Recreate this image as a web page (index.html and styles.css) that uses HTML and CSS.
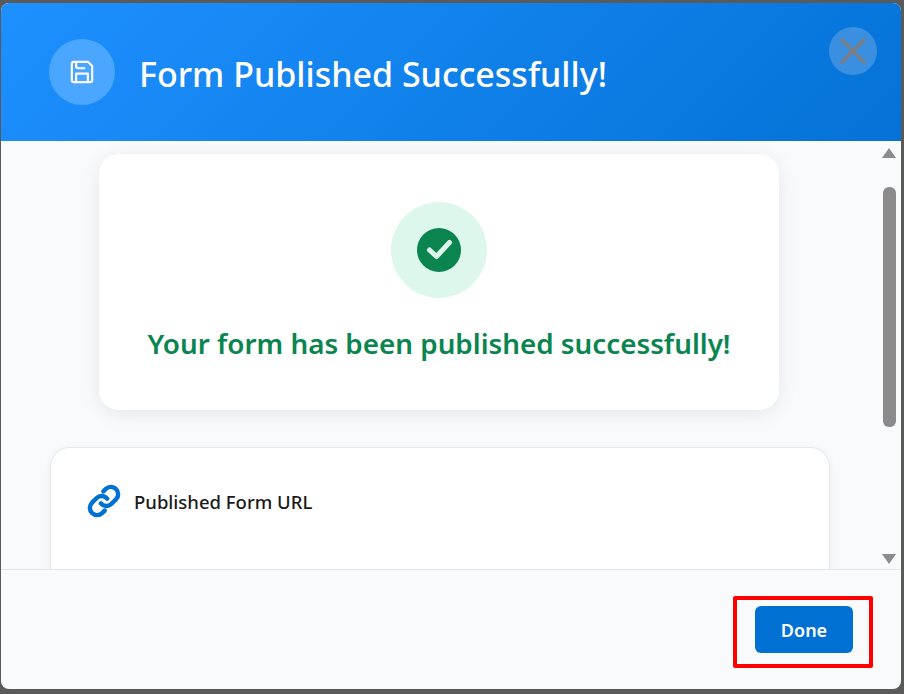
FILE: index.html
```html
<!DOCTYPE html>
<html lang="en">
	<head>
		<title>Form Published</title>
		<meta charset="utf-8">
		<link rel="stylesheet" href="styles.css">
	</head>

	<body>
		<div class="dialog">
			<div class="dialog-header">
				<div class="header-icon">
					<svg width="30" height="30" viewBox="0 0 28 28" fill="none" stroke="#fff" stroke-width="2" stroke-linejoin="round">
						<path d="M4.5 6.5a2 2 0 0 1 2-2h13l4 4v13a2 2 0 0 1-2 2h-15a2 2 0 0 1-2-2z"/>
						<path d="M8.5 23.5v-8h11v8"/>
						<path d="M8.5 4.5v4a2 2 0 0 0 2 2h6.500"/>
					</svg>
				</div>
				<h1 class="dialog-title">Form Published Successfully!</h1>
				<button class="close-btn">
					<svg width="26" height="26" viewBox="0 0 26 26" stroke="#7b7f85" stroke-width="3.600">
						<path d="M1 1l24 24M25 1L1 25"/>
					</svg>
				</button>
			</div>

			<div class="dialog-body">
				<div class="scroll-area">
					<div class="success-card">
						<div class="success-ring">
							<svg width="44" height="44" viewBox="0 0 44 44">
								<circle cx="22" cy="22" r="22" fill="#0a8550"/>
								<path d="M12.500 22l7 6.500 13-14" fill="none" stroke="#def7ec" stroke-width="5" stroke-linecap="round" stroke-linejoin="round"/>
							</svg>
						</div>
						<div class="success-text">Your form has been published successfully!</div>
					</div>

					<div class="url-card">
						<div class="url-label">
							<svg width="38" height="38" viewBox="0 0 24 24" fill="none" stroke="#0070d2" stroke-width="2.800" stroke-linecap="round">
								<path d="M10 13.500a4.500 4.500 0 0 0 6.600.4l3.100-3.100a4.600 4.600 0 0 0-6.500-6.500l-1.600 1.600"/>
								<path d="M14 10.500a4.500 4.500 0 0 0-6.600-.4l-3.100 3.100a4.600 4.600 0 0 0 6.500 6.500l1.600-1.600"/>
							</svg>
							<span>Published Form URL</span>
						</div>
					</div>
				</div>

				<div class="scrollbar">
					<div class="arrow-up"></div>
					<div class="thumb"></div>
					<div class="arrow-down"></div>
				</div>
			</div>

			<div class="dialog-footer">
				<button class="done-btn">Done</button>
				<div class="highlight"></div>
			</div>
		</div>
	</body>
</html>
```

FILE: styles.css
```css
html, body {
	height: 100%;
}

body {
	margin: 0;
	padding: 3px 3px 5px 1px;
	box-sizing: border-box;
	background: #5a5a5a;
	font-family: "Noto Sans", "Open Sans", sans-serif;
}

.dialog {
	height: 100%;
	display: flex;
	flex-direction: column;
	background: #f9fafc;
	border-radius: 8px;
	overflow: hidden;
}

.dialog-header {
	position: relative;
	flex: 0 0 138px;
	box-sizing: border-box;
	display: flex;
	align-items: center;
	padding: 0 48px;
	gap: 24px;
	background: linear-gradient(135deg, #1e90ff, #0472d6);
	color: #fff;
}

.header-icon {
	width: 66px;
	height: 66px;
	border-radius: 50%;
	background: #4ba6ff;
	display: flex;
	align-items: center;
	justify-content: center;
}

.dialog-title {
	margin: 0;
	padding-top: 4px;
	font-size: 34px;
	font-weight: 500;
	white-space: nowrap;
}

.close-btn {
	position: absolute;
	top: 24px;
	right: 24px;
	width: 48px;
	height: 48px;
	padding: 0;
	border: 0;
	border-radius: 50%;
	background: #3a8fe0;
	display: flex;
	align-items: center;
	justify-content: center;
}

.dialog-body {
	position: relative;
	flex: 1;
	min-height: 0;
	overflow: hidden;
}

.scroll-area {
	padding: 13px 72px 0 48px;
	display: flex;
	flex-direction: column;
	align-items: center;
	gap: 37px;
}

.success-card {
	width: 680px;
	height: 256px;
	box-sizing: border-box;
	padding-top: 48px;
	background: #fff;
	border-radius: 20px;
	box-shadow: 0 4px 20px rgba(0, 0, 0, 0.08);
	display: flex;
	flex-direction: column;
	align-items: center;
	gap: 26px;
}

.success-ring {
	width: 96px;
	height: 96px;
	border-radius: 50%;
	background: #def7ec;
	display: flex;
	align-items: center;
	justify-content: center;
}

.success-text {
	font-size: 27.800px;
	font-weight: 600;
	color: #0a8550;
	white-space: nowrap;
}

.url-card {
	align-self: stretch;
	margin: 0 -1px 0 1px;
	height: 200px;
	box-sizing: border-box;
	padding: 34px 34px 0;
	background: #fff;
	border: 1px solid #e6e8ec;
	border-radius: 20px;
	box-shadow: 0 2px 10px rgba(0, 0, 0, 0.05);
}

.url-label {
	display: flex;
	align-items: center;
	gap: 11px;
	font-size: 18.500px;
	font-weight: 500;
	color: #1a1a1a;
}

.scrollbar {
	position: absolute;
	top: 0;
	right: 4px;
	bottom: 0;
	width: 16px;
	display: flex;
	flex-direction: column;
	align-items: center;
	padding-top: 7px;
	box-sizing: border-box;
}

.arrow-up, .arrow-down {
	width: 0;
	height: 0;
	border-left: 7.500px solid transparent;
	border-right: 7.500px solid transparent;
}

.arrow-up {
	border-bottom: 10px solid #8b8b8b;
}

.arrow-down {
	margin-top: 127px;
	border-top: 10px solid #8b8b8b;
}

.thumb {
	width: 13px;
	height: 240px;
	margin-top: 29px;
	border-radius: 6px;
	background: #8b8b8b;
}

.dialog-footer {
	position: relative;
	flex: 0 0 120px;
	box-sizing: border-box;
	border-top: 1px solid #e4e6ea;
	display: flex;
	justify-content: flex-end;
	align-items: flex-start;
	padding: 36px 48px 0 0;
}

.done-btn {
	width: 98px;
	height: 47px;
	border: 0;
	border-radius: 6px;
	background: #0070d2;
	color: #fff;
	font-family: inherit;
	font-size: 18px;
	font-weight: 600;
}

.highlight {
	position: absolute;
	top: 26px;
	right: 28px;
	width: 140px;
	height: 72px;
	box-sizing: border-box;
	border: 4px solid #f00;
	border-radius: 2px;
}
```
